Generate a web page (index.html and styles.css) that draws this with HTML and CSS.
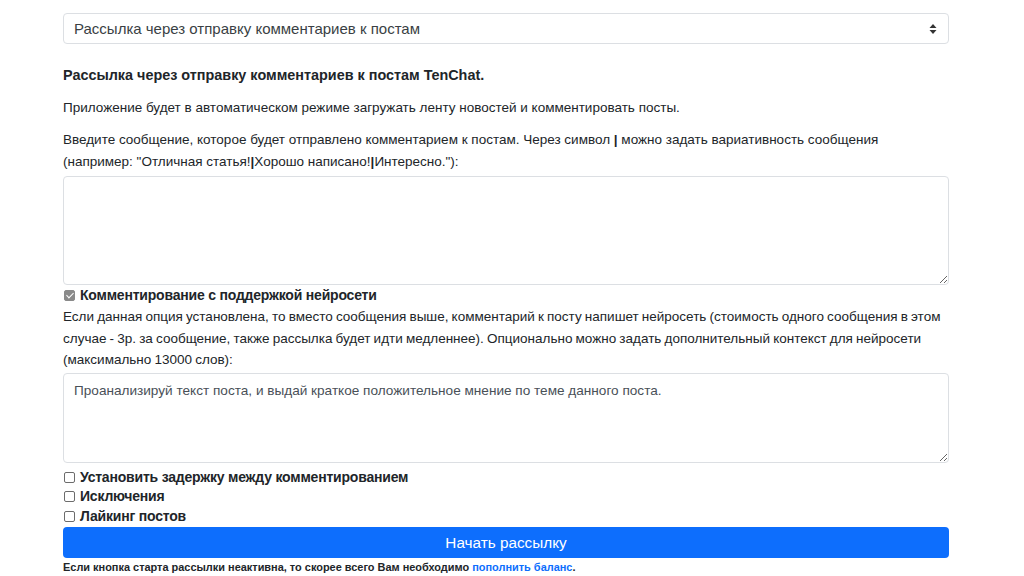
FILE: index.html
```html
<!DOCTYPE html>
<html>
<head>
  <title>Рассылка TenChat</title>
  <meta charset="utf-8">
  <link rel="stylesheet" href="styles.css">
</head>
<body>
  <div class="container">
    <div class="select-box">
      <span>Рассылка через отправку комментариев к постам</span>
      <svg class="arrows" width="8" height="12" viewBox="0 0 8 12"><path d="M4 1 L7.5 5 H0.5 Z M4 11 L7.5 7 H0.5 Z" fill="#333"/></svg>
    </div>

    <p class="title">Рассылка через отправку комментариев к постам TenChat.</p>
    <p class="text">Приложение будет в автоматическом режиме загружать ленту новостей и комментировать посты.</p>
    <p class="text first">Введите сообщение, которое будет отправлено комментарием к постам. Через символ <b>|</b> можно задать вариативность сообщения (например: "Отличная статья!<b>|</b>Хорошо написано!<b>|</b>Интересно."):</p>

    <textarea class="field big"></textarea>

    <label class="check"><span class="box checked"></span>Комментирование с поддержкой нейросети</label>
    <p class="text second">Если данная опция установлена, то вместо сообщения выше, комментарий к посту напишет нейросеть (стоимость одного сообщения в этом случае - 3р. за сообщение, также рассылка будет идти медленнее). Опционально можно задать дополнительный контекст для нейросети (максимально 13000 слов):</p>

    <textarea class="field small">Проанализируй текст поста, и выдай краткое положительное мнение по теме данного поста.</textarea>

    <div class="options">
      <label class="check"><span class="box"></span>Установить задержку между комментированием</label>
      <label class="check"><span class="box"></span>Исключения</label>
      <label class="check"><span class="box"></span>Лайкинг постов</label>
    </div>

    <button class="start">Начать рассылку</button>
    <p class="note">Если кнопка старта рассылки неактивна, то скорее всего Вам необходимо <a href="#">пополнить баланс</a>.</p>
  </div>
</body>
</html>
```

FILE: styles.css
```css
body {
  margin: 0;
  background: #fff;
  color: #212529;
  font-family: "Liberation Sans", Arial, sans-serif;
  font-size: 13.5px;
  line-height: 21.5px;
}

.container {
  width: 886px;
  margin: 0 0 0 63px;
  padding-top: 13px;
}

.select-box {
  height: 31px;
  box-sizing: border-box;
  border: 1px solid #dcdfe3;
  border-radius: 4px;
  padding: 0 11px 0 10px;
  display: flex;
  align-items: center;
  justify-content: space-between;
  font-size: 15px;
  color: #3a3f44;
}

.title {
  font-weight: bold;
  font-size: 14.4px;
  margin: 21px 0 10px;
}

.text {
  margin: 0 0 11px;
}

.text.first {
  margin-bottom: 4px;
}

.text.second {
  margin-bottom: 2px;
  word-spacing: -0.6px;
}

.field {
  display: block;
  width: 100%;
  box-sizing: border-box;
  border: 1px solid #dcdfe3;
  border-radius: 4px;
  padding: 6px 10px;
  font-family: inherit;
  font-size: 13.6px;
  line-height: 21.5px;
  color: #495057;
  resize: vertical;
}

.field.big {
  height: 109px;
}

.field.small {
  height: 90px;
}

.check {
  display: flex;
  align-items: center;
  font-weight: bold;
  font-size: 14px;
  letter-spacing: -0.2px;
  line-height: 21px;
}

.box {
  width: 11px;
  height: 11px;
  box-sizing: border-box;
  border: 1px solid #6c6c6c;
  border-radius: 2px;
  margin: 0 5px 0 1px;
  background: #fff;
}

.box.checked {
  background: #8a8a8a;
  border-color: #8a8a8a;
  position: relative;
}

.box.checked::after {
  content: "";
  position: absolute;
  left: 3px;
  top: 0px;
  width: 3px;
  height: 6px;
  border: solid #fff;
  border-width: 0 1.5px 1.5px 0;
  transform: rotate(45deg);
}

.options {
  margin-top: 5px;
  display: flex;
  flex-direction: column;
}

.options .check {
  line-height: 19.5px;
}

.start {
  display: block;
  width: 100%;
  height: 31px;
  margin-top: 1px;
  border: none;
  border-radius: 4px;
  background: #0d6efd;
  color: #fff;
  font-family: inherit;
  font-size: 15.3px;
}

.note {
  margin: 2px 0 0;
  font-size: 10.95px;
  font-weight: bold;
  line-height: 14px;
}

.note a {
  color: #0d6efd;
  text-decoration: none;
}
```
